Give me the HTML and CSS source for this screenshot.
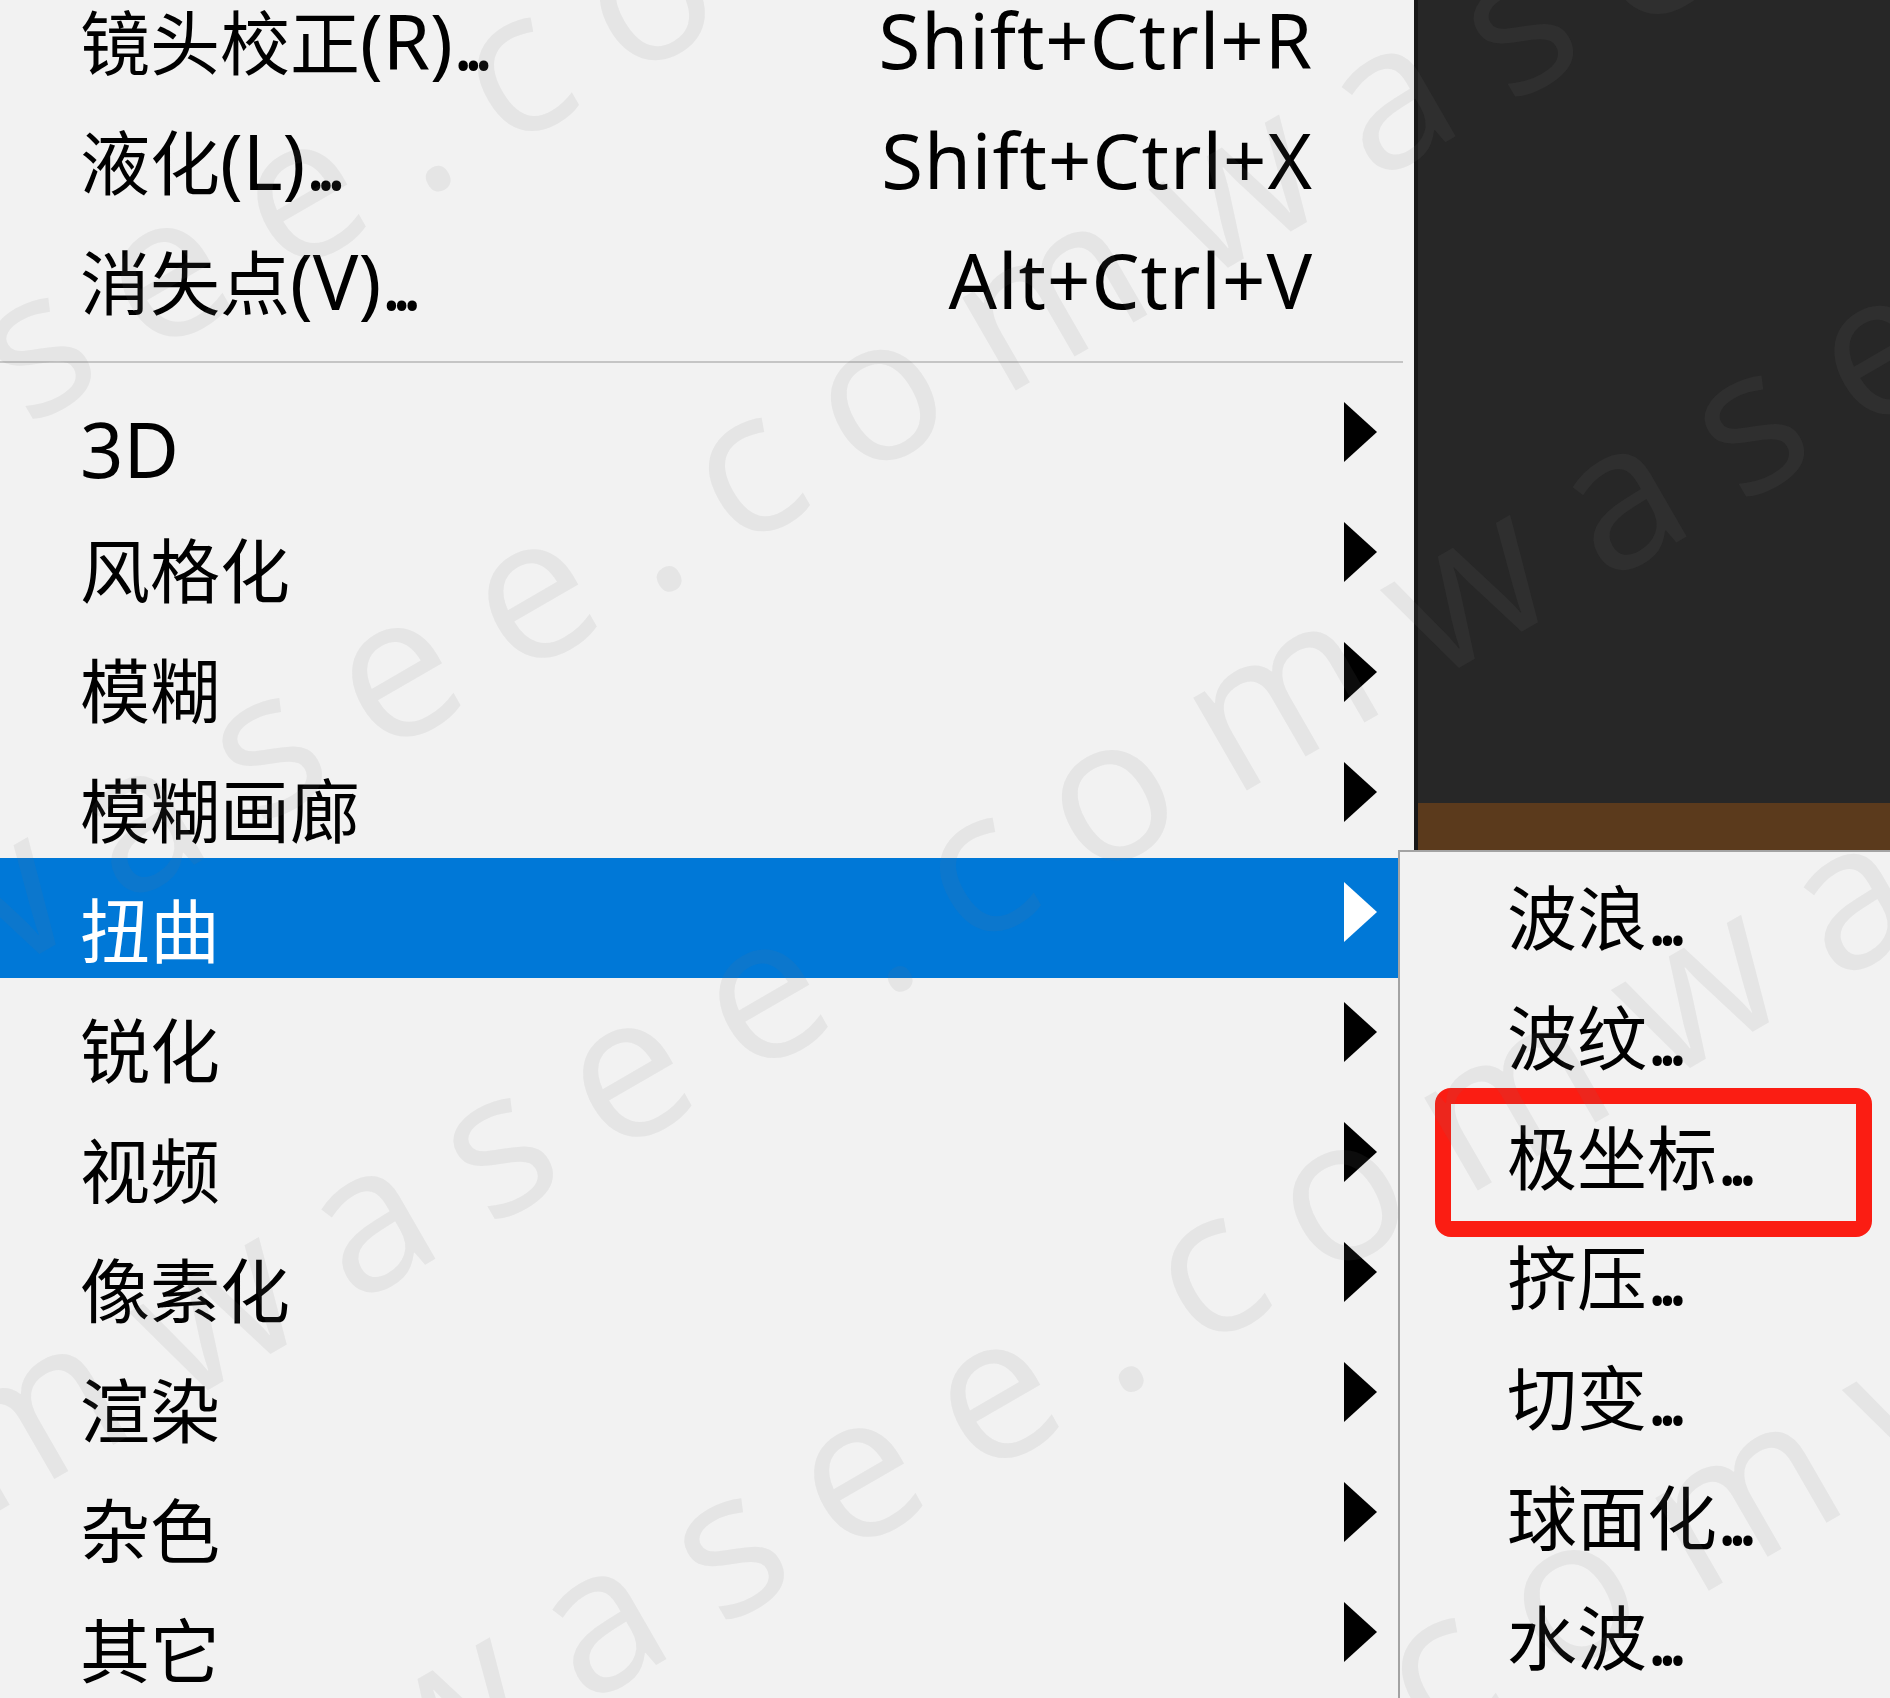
FILE: index.html
```html
<!DOCTYPE html>
<html lang="zh-CN">
<head>
    <meta charset="UTF-8">
    <title>滤镜菜单</title>
    <link rel="stylesheet" href="styles.css">
</head>
<body>
    <div class="screen">
        <div class="menu">
            <div class="group top-group">
                <div class="item">
                    <span class="label">镜头校正<span class="lat">(R)</span><span class="dots">...</span></span>
                    <span class="shortcut">Shift+Ctrl+R</span>
                </div>
                <div class="item">
                    <span class="label">液化<span class="lat">(L)</span><span class="dots">...</span></span>
                    <span class="shortcut">Shift+Ctrl+X</span>
                </div>
                <div class="item">
                    <span class="label">消失点<span class="lat">(V)</span><span class="dots">...</span></span>
                    <span class="shortcut">Alt+Ctrl+V</span>
                </div>
            </div>

            <div class="separator"></div>

            <div class="group">
                <div class="item"><span class="label"><span class="lat">3D</span></span><span class="arrow"></span></div>
                <div class="item"><span class="label">风格化</span><span class="arrow"></span></div>
                <div class="item"><span class="label">模糊</span><span class="arrow"></span></div>
                <div class="item"><span class="label">模糊画廊</span><span class="arrow"></span></div>
                <div class="item active"><span class="label">扭曲</span><span class="arrow"></span></div>
                <div class="item"><span class="label">锐化</span><span class="arrow"></span></div>
                <div class="item"><span class="label">视频</span><span class="arrow"></span></div>
                <div class="item"><span class="label">像素化</span><span class="arrow"></span></div>
                <div class="item"><span class="label">渲染</span><span class="arrow"></span></div>
                <div class="item"><span class="label">杂色</span><span class="arrow"></span></div>
                <div class="item"><span class="label">其它</span><span class="arrow"></span></div>
            </div>
        </div>

        <div class="canvas">
            <div class="canvas-dark"></div>
            <div class="canvas-photo"></div>
        </div>

        <!-- 扭曲 submenu -->
        <div class="submenu">
            <div class="sub-item">波浪<span class="dots">...</span></div>
            <div class="sub-item">波纹<span class="dots">...</span></div>
            <div class="sub-item">极坐标<span class="dots">...</span></div>
            <div class="sub-item">挤压<span class="dots">...</span></div>
            <div class="sub-item">切变<span class="dots">...</span></div>
            <div class="sub-item">球面化<span class="dots">...</span></div>
            <div class="sub-item">水波<span class="dots">...</span></div>
        </div>

        <div class="callout"></div>

        <div class="watermark">
            <div class="wm-lines">
                <div>wasee.comwasee.comwasee.com</div>
                <div>wasee.comwasee.comwasee.com</div>
                <div>wasee.comwasee.comwasee.com</div>
                <div>wasee.comwasee.comwasee.com</div>
                <div>wasee.comwasee.comwasee.com</div>
            </div>
        </div>
    </div>
</body>
</html>
```

FILE: styles.css
```css
* {
    box-sizing: border-box;
}
body {
    margin: 0;
    background: #272727;
    font-family: "Noto Sans CJK SC", "Noto Sans", sans-serif;
    color: #000;
}
.screen {
    position: relative;
    width: 1890px;
    height: 1698px;
    overflow: hidden;
    display: grid;
    grid-template-columns: 1418px 1fr;
}
.menu {
    background: #f2f2f2;
    border-right: 4px solid #181818;
}
.top-group {
    margin-top: -30px;
}
.item {
    height: 120px;
    display: flex;
    align-items: flex-start;
    padding: 0 37px 0 80px;
    font-size: 70px;
}
.item.active {
    background: #0078d7;
    color: #fff;
}
.label {
    flex: 1;
    line-height: 72px;
    margin-top: 34px;
    white-space: nowrap;
}
.lat {
    font-family: "Noto Sans", sans-serif;
    font-size: 76px;
}
.dots {
    font-family: "Noto Sans", sans-serif;
    font-size: 76px;
    letter-spacing: -10px;
}
.shortcut {
    font-family: "Noto Sans", sans-serif;
    font-size: 76px;
    line-height: 72px;
    letter-spacing: 1px;
    margin-top: 34px;
    margin-right: 64px;
    white-space: nowrap;
}
.arrow {
    width: 0;
    height: 0;
    margin-top: 24px;
    border-top: 30px solid transparent;
    border-bottom: 30px solid transparent;
    border-left: 33px solid currentColor;
}
.separator {
    height: 2px;
    background: #c5c5c5;
    margin: 31px 11px 15px 0;
}
.canvas {
    display: flex;
    flex-direction: column;
}
.canvas-dark {
    height: 803px;
    background: #272727;
}
.canvas-photo {
    flex: 1;
    background: #5b3a1c;
}
.submenu {
    position: absolute;
    left: 1398px;
    top: 850px;
    right: 0;
    bottom: 0;
    background: #f2f2f2;
    border-left: 2px solid #a3a3a3;
    border-top: 2px solid #a3a3a3;
    padding-left: 107px;
}
.sub-item {
    height: 120px;
    padding-top: 27px;
    font-size: 70px;
    line-height: 72px;
    white-space: nowrap;
}
.callout {
    position: absolute;
    left: 1435px;
    top: 1088px;
    width: 437px;
    height: 149px;
    border: 16px solid #fb1d13;
    border-radius: 16px;
}
.watermark {
    position: absolute;
    inset: 0;
    overflow: hidden;
    pointer-events: none;
}
.wm-lines {
    position: absolute;
    left: 0;
    top: 0;
    transform-origin: 0 0;
    transform: rotate(-30deg) translate(-1992px, 76px);
    font-family: "Open Sans", sans-serif;
    font-size: 200px;
    line-height: 462px;
    letter-spacing: 45px;
    color: rgba(116, 116, 116, 0.1);
    white-space: nowrap;
}
```
